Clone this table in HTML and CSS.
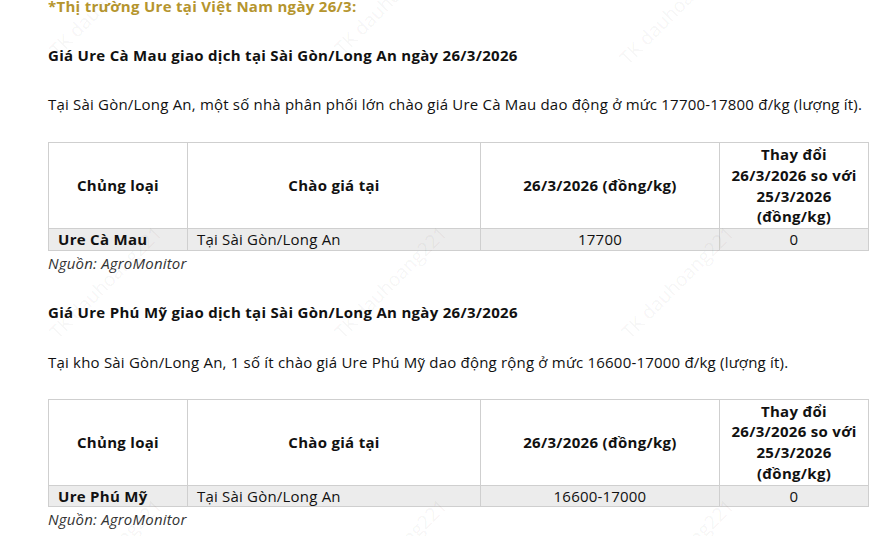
FILE: index.html
```html
<!DOCTYPE html>
<html lang="vi">
<head>
<meta charset="utf-8">
<link rel="stylesheet" href="styles.css">
</head>
<body>
<div class="page">
  <p class="title">*Thị trường Ure tại Việt Nam ngày 26/3:</p>

  <p class="heading">Giá Ure Cà Mau giao dịch tại Sài Gòn/Long An ngày 26/3/2026</p>
  <p class="para">Tại Sài Gòn/Long An, một số nhà phân phối lớn chào giá Ure Cà Mau dao động ở mức 17700-17800 đ/kg (lượng ít).</p>
  <table class="price">
    <colgroup><col class="c1"><col class="c2"><col class="c3"><col class="c4"></colgroup>
    <tr class="head"><th>Chủng loại</th><th>Chào giá tại</th><th>26/3/2026 (đồng/kg)</th><th>Thay đổi 26/3/2026 so với 25/3/2026 (đồng/kg)</th></tr>
    <tr class="row"><td class="name">Ure Cà Mau</td><td class="place">Tại Sài Gòn/Long An</td><td class="num">17700</td><td class="num">0</td></tr>
  </table>
  <p class="source">Nguồn: AgroMonitor</p>

  <p class="heading h2">Giá Ure Phú Mỹ giao dịch tại Sài Gòn/Long An ngày 26/3/2026</p>
  <p class="para">Tại kho Sài Gòn/Long An, 1 số ít chào giá Ure Phú Mỹ dao động rộng ở mức 16600-17000 đ/kg (lượng ít).</p>
  <table class="price second">
    <colgroup><col class="c1"><col class="c2"><col class="c3"><col class="c4"></colgroup>
    <tr class="head"><th>Chủng loại</th><th>Chào giá tại</th><th>26/3/2026 (đồng/kg)</th><th>Thay đổi 26/3/2026 so với 25/3/2026 (đồng/kg)</th></tr>
    <tr class="row"><td class="name">Ure Phú Mỹ</td><td class="place">Tại Sài Gòn/Long An</td><td class="num">16600-17000</td><td class="num">0</td></tr>
  </table>
  <p class="source">Nguồn: AgroMonitor</p>
</div>
<div class="wm-layer" aria-hidden="true">
  <span class="wm" style="left:60px;top:40px">TK dauhoang221</span>
  <span class="wm" style="left:345px;top:38px">TK dauhoang221</span>
  <span class="wm" style="left:630px;top:48px">TK dauhoang221</span>
  <span class="wm" style="left:60px;top:322px">TK dauhoang221</span>
  <span class="wm" style="left:345px;top:322px">TK dauhoang221</span>
  <span class="wm" style="left:632px;top:322px">TK dauhoang221</span>
  <span class="wm" style="left:60px;top:595px">TK dauhoang221</span>
  <span class="wm" style="left:345px;top:595px">TK dauhoang221</span>
  <span class="wm" style="left:632px;top:595px">TK dauhoang221</span>
</div>
</body>
</html>
```

FILE: styles.css
```css
html, body {
  margin: 0;
  padding: 0;
  background: #fff;
  overflow: hidden;
}
body {
  font-family: "Open Sans", "Noto Sans", sans-serif;
  font-size: 15px;
  line-height: 20.7px;
  color: #111;
  letter-spacing: 0.2px;
}
.page {
  width: 820px;
  padding-left: 48px;
  margin-top: -4px;
}
p { margin: 0; }
.title {
  font-weight: 700;
  color: #b5952e;
  letter-spacing: 0.3px;
}
.heading {
  font-weight: 700;
  margin-top: 28px;
  letter-spacing: 0.3px;
}
.heading.h2 { margin-top: 29px; }
.para {
  margin-top: 29px;
}
.price {
  margin-top: 27px;
  width: 820px;
  border-collapse: collapse;
  table-layout: fixed;
}
.para + .price { margin-top: 27px; }
.para + .price.second { margin-top: 26px; }
.c1 { width: 139px; }
.c2 { width: 293px; }
.c3 { width: 239px; }
.c4 { width: 149px; }
.price th, .price td {
  border: 1px solid #cfcfcf;
  padding: 0 9px;
  vertical-align: middle;
}
.price th {
  font-weight: 700;
  text-align: center;
  padding-top: 1px;
  padding-bottom: 1px;
  letter-spacing: 0.3px;
}
.row td { background: #ececec; }
.name { font-weight: 700; letter-spacing: 0.3px; }
.num { text-align: center; }
.source {
  font-style: italic;
  color: #333;
  margin-top: 2px;
}
.wm-layer {
  position: absolute;
  inset: 0;
  pointer-events: none;
  overflow: hidden;
}
.wm {
  position: absolute;
  font-size: 19px;
  line-height: 20px;
  color: rgba(0, 0, 0, 0.05);
  transform: rotate(-45deg);
  transform-origin: left bottom;
  white-space: nowrap;
  letter-spacing: 0;
}
```
